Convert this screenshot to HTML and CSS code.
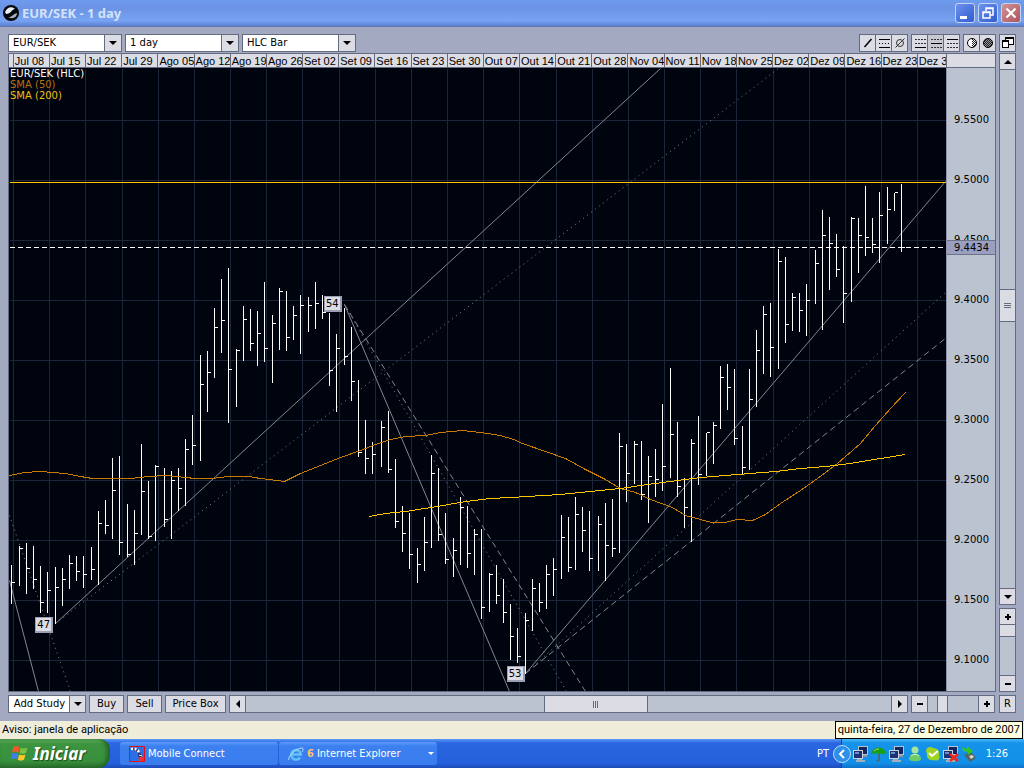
FILE: index.html
```
<!DOCTYPE html>
<html lang="pt">
<head>
<meta charset="utf-8">
<title>EUR/SEK - 1 day</title>
<link rel="stylesheet" href="styles.css">
</head>
<body>
<svg class="defs" width="0" height="0" aria-hidden="true">
  <defs>
    <pattern id="check" width="2" height="2" patternUnits="userSpaceOnUse"><path d="M0 0h1v1H0zM1 1h1v1H1z" fill="#222"/></pattern>
    <symbol id="computers" viewBox="0 0 16 16">
      <path d="M5 0h10v9H5z" fill="#b9c2cf"/><path d="M6 1h8v7H6z" fill="#14265e"/><path d="M9 9h5v2H9z" fill="#8c97a6"/>
      <path d="M0 4h10v9H0z" fill="#c9d1db"/><path d="M1 5h8v7H1z" fill="#1c3272"/><path d="M2 6h4v2H2z" fill="#6e8fd2"/><path d="M4 13h5v1h3v2H3v-2h1z" fill="#a4adba"/>
    </symbol>
  </defs>
</svg>

<header class="titlebar">
  <svg class="app-icon" viewBox="0 0 16 16" aria-hidden="true"><circle cx="8" cy="8" r="8" fill="#05070d"/><path d="M2 7c2-5 7-6 10-3-3 0-4 5-9 5z" fill="#e8edf2"/><path d="M5 12c3 1 5-3 9-4 0 4-4 7-9 4z" fill="#a9b1bb"/></svg>
  <h1 class="title">EUR/SEK - 1 day</h1>
  <button class="win-btn" aria-label="Minimizar"><svg viewBox="0 0 18 18"><path d="M4 12h7v3H4z" fill="#fff"/></svg></button>
  <button class="win-btn" aria-label="Restaurar"><svg viewBox="0 0 18 18"><path d="M7 7V4h7v7h-3M7 4.500h7M4 8h7v6H4zM4 8.500h7" fill="none" stroke="#fff" stroke-width="1.500"/></svg></button>
  <button class="win-btn win-close" aria-label="Fechar"><svg viewBox="0 0 18 18"><path d="M4.500 4.500l9 9M13.500 4.500l-9 9" stroke="#fff" stroke-width="2.200"/></svg></button>
</header>

<main class="client">
  <div class="toolbar">
    <div class="combo"><select aria-label="Par"><option>EUR/SEK</option></select><span class="combo-arrow"><i class="tri tri-down"></i></span></div>
    <div class="combo"><select aria-label="Período"><option>1 day</option></select><span class="combo-arrow"><i class="tri tri-down"></i></span></div>
    <div class="combo"><select aria-label="Tipo"><option>HLC Bar</option></select><span class="combo-arrow"><i class="tri tri-down"></i></span></div>
    <div class="tools">
      <div class="group">
        <button class="btn tool" aria-label="Linha"><svg viewBox="0 0 16 16"><path d="M4.500 12l7-8" stroke="#000" stroke-width="1.500"/></svg></button>
        <button class="btn tool" aria-label="Canal"><svg viewBox="0 0 16 16" class="crisp"><path d="M3 4h11v1H3zM3 12h11v1H3z"/><path d="M3 8h1v1H3zM6 8h1v1H6zM9 8h1v1H9zM12 8h1v1h-1z"/></svg></button>
        <button class="btn tool" aria-label="Sem linhas"><svg viewBox="0 0 16 16"><circle cx="8" cy="8" r="3.500" fill="none" stroke="#333"/><path d="M3.500 12.500l9-9" stroke="#333"/></svg></button>
      </div>
      <div class="group">
        <button class="btn tool" aria-label="Níveis inferiores"><svg viewBox="0 0 16 16" class="crisp"><path d="M3 12h11v1H3z"/><path d="M3 4.500h11M3 8.500h11" stroke="#333" stroke-dasharray="2 1"/></svg></button>
        <button class="btn tool pressed" aria-label="Níveis centrais"><svg viewBox="0 0 16 16" class="crisp"><path d="M3 8h11v1H3z"/><path d="M3 4.500h11M3 12.500h11" stroke="#333" stroke-dasharray="2 1"/></svg></button>
        <button class="btn tool" aria-label="Níveis superiores"><svg viewBox="0 0 16 16" class="crisp"><path d="M3 4h11v1H3z"/><path d="M3 8.500h11M3 12.500h11" stroke="#333" stroke-dasharray="2 1"/></svg></button>
      </div>
      <div class="group">
        <button class="btn tool" aria-label="Meio tom"><svg viewBox="0 0 16 16"><circle cx="8" cy="8" r="4.500" fill="#fff"/><path d="M8 3.500a4.500 4.500 0 010 9z" fill="url(#check)"/><circle cx="8" cy="8" r="4.500" fill="none" stroke="#000"/></svg></button>
        <button class="btn tool" aria-label="Tom cheio"><svg viewBox="0 0 16 16"><circle cx="8" cy="8" r="4.500" fill="#999"/><circle cx="8" cy="8" r="4.500" fill="url(#check)" stroke="#000"/></svg></button>
      </div>
      <div class="group group-last">
        <button class="btn tool" aria-label="Janelas"><svg viewBox="0 0 16 16" class="crisp" fill="#fff" stroke="#000"><path d="M5.500 2.500h8v7h-8zM5 3.500h8"/><path d="M2.500 5.500h6v7h-6zM2 6.500h6"/></svg></button>
      </div>
    </div>
  </div>

  <div class="workspace">
    <section class="frame" aria-label="Gráfico EUR/SEK">
      <div class="dates">
        <div class="dates-scale" id="dates"></div>
        <div class="dates-corner"></div>
      </div>
      <div class="plot-row">
        <div class="plot">
          <svg class="chart" viewBox="8.500 67.500 937 623" preserveAspectRatio="none" role="img" aria-label="EUR/SEK HLC">
            <path id="grid" class="grid"/>
            <g class="trend">
              <path d="M55 623L660 68M344 304L509 691M525 673L945 181M9 580L38 691"/>
              <path class="dots" d="M55 623L778 68M344 304L566 691M525 673L946 291M9 515L70 691"/>
              <path class="dashes" d="M344 304L585 691M525 673L946 337"/>
            </g>
            <path class="last" d="M9 247H946"/>
            <path id="bars" class="bars"/>
            <polyline class="sma50" points="9,475 24,472 40,471 65,473 80,476 92,478 130,478 148,476 165,475 195,478 212,478 228,476 248,476 260,478 284,481 300,473 320,465 340,457 360,450 375,444 390,439 405,436 425,435 440,432 462,430 480,432 500,435 513,439 522,443 545,451 565,458 585,469 603,478 620,488 635,492 650,499 672,507 685,515 700,519 711,522 724,522 737,519 752,520 765,514 780,503 800,490 817,478 837,463 860,443 875,425 890,408 905,392"/>
            <polyline class="sma200" points="369,516 385,513 405,511 437,506 465,501 490,498 510,497 560,494 590,491 620,488 647,484 677,480 700,477 737,474 775,471 800,468 825,466 850,463 880,458 905,454"/>
            <path class="high" d="M9 182H946"/>
          </svg>
          <ul class="legend"><li>EUR/SEK (HLC)</li><li class="c50">SMA (50)</li><li class="c200">SMA (200)</li></ul>
          <span class="pin pin-47">47</span><span class="pin pin-54">54</span><span class="pin pin-53">53</span>
        </div>
        <div class="axis">
          <span>9.5500</span><span>9.5000</span><span>9.4500</span><span>9.4000</span><span>9.3500</span><span>9.3000</span><span>9.2500</span><span>9.2000</span><span>9.1500</span><span>9.1000</span>
          <strong class="current">9.4434</strong>
        </div>
      </div>
    </section>
    <div class="vertical">
      <div class="vbar vscroll">
        <button class="btn end" aria-label="Subir"><i class="tri tri-up"></i></button>
        <div class="space space-a"></div><div class="thumb vthumb"><i class="grip"></i></div><div class="space space-b"></div>
        <button class="btn end" aria-label="Descer"><i class="tri tri-down"></i></button>
      </div>
      <div class="vbar vzoom">
        <button class="btn end" aria-label="Ampliar preço"><i class="plus"></i></button>
        <div class="thumb small"></div><div class="space"></div>
        <button class="btn end" aria-label="Reduzir preço"><i class="minus"></i></button>
      </div>
    </div>
  </div>

  <div class="bottom">
    <div class="study"><button class="study-main">Add Study</button><button class="btn end" aria-label="Lista de estudos"><i class="tri tri-down"></i></button></div>
    <button class="btn text-btn">Buy</button>
    <button class="btn text-btn">Sell</button>
    <button class="btn text-btn wide">Price Box</button>
    <div class="hbar hscroll">
      <button class="btn end" aria-label="Esquerda"><i class="tri tri-left"></i></button>
      <div class="space space-c"></div><div class="thumb hthumb"><i class="grip grip-v"></i></div><div class="space space-d"></div>
      <button class="btn end" aria-label="Direita"><i class="tri tri-right"></i></button>
    </div>
    <div class="hbar hzoom">
      <button class="btn end" aria-label="Reduzir"><i class="minus"></i></button>
      <div class="space"></div><div class="thumb hsmall"></div><div class="space space-f"></div>
      <button class="btn end" aria-label="Ampliar"><i class="plus"></i></button>
    </div>
    <button class="btn reset">R</button>
  </div>
</main>

<div class="status"><span>Aviso: janela de aplicação</span><span class="tooltip" role="tooltip">quinta-feira, 27 de Dezembro de 2007</span></div>

<footer class="taskbar">
  <button class="start"><svg viewBox="0 0 18 18" aria-hidden="true"><path d="M3 3c2-1.500 4-1.500 6 0L8 8C6 7 4 7 2 8z" fill="#ee5a2c"/><path d="M10 3.500c2 1 4 1 6.500 0l-1.500 5c-2 1-4 1-6 0z" fill="#7dc242"/><path d="M1.700 9.500c2-1.500 4-1 6 0l-1 5c-2-1-4-1-6.200 0z" fill="#3f7fe8"/><path d="M8.700 10c2 1 4 1 6 0l-1.400 5c-2 1-4 1-6 0z" fill="#fcc828"/></svg>Iniciar</button>
  <button class="task"><svg viewBox="0 0 16 16" aria-hidden="true"><path d="M.5.500h15v15H.5z" fill="#2a6fe6" stroke="#e01010"/><path d="M2 3c3-1 6 0 8 3" fill="none" stroke="#fff" stroke-width="2.500" stroke-dasharray="2 1.500"/><path d="M2 3.500c3-1 6 0 8 3" fill="none" stroke="#a01818" stroke-width="2.500" stroke-dasharray="1 2.500" stroke-dashoffset="-2.300"/><path d="M9 7l3 1 1 3-3 1z" fill="#3a1012"/><circle cx="12" cy="13" r="2.500" fill="#e33"/><path d="M10 9l3 1" stroke="#fff"/></svg>Mobile Connect</button>
  <button class="task"><svg viewBox="0 0 16 16" aria-hidden="true"><path d="M12 11.500a4.800 4.800 0 11.800-3H4" fill="none" stroke="#62c4f5" stroke-width="2.500"/><path d="M1 14C-1 11 8 2 14 2c2 0 1 3 0 4" fill="none" stroke="#b9dcf6"/></svg><b class="count">6</b>Internet Explorer<i class="tri tri-down tri-white"></i></button>
  <span class="lang">PT</span>
  <div class="tray">
    <button class="chevron" aria-label="Mostrar ícones"><svg viewBox="0 0 18 18"><circle cx="9" cy="9" r="8.500" fill="#2f8fe8" stroke="#b9def8"/><path d="M11 5L7 9l4 4" fill="none" stroke="#fff" stroke-width="2"/></svg></button>
    <svg viewBox="0 0 16 16"><use href="#computers"/></svg>
    <svg viewBox="0 0 16 16"><path d="M0 8c2-8 12-9 16 0-2-1-3-1-4 1-1-2-3-2-4 0-1-2-3-2-4-1-1-1-3-1-4 0z" fill="#18a018"/><path d="M3 5c2-2 4-2 5-2" stroke="#a7e05a" fill="none"/><path d="M8 8v6c0 2-2 1-2 0" fill="none" stroke="#6b4a20"/></svg>
    <svg viewBox="0 0 16 16"><use href="#computers"/></svg>
    <svg viewBox="0 0 16 16"><circle cx="8" cy="4" r="3.500" fill="#a5e49a"/><path d="M2 13c0-7 12-7 12 0 0 3-12 3-12 0z" fill="#6ccb68"/><path d="M4 10c2-2 6-2 8 0" stroke="#d7f6d0" fill="none"/></svg>
    <svg viewBox="0 0 16 16"><path d="M1 5c0-4 5-5 7-3 5 0 7 4 6 7 2 3-1 7-5 5-4 1-8-2-7-6z" fill="#9dd424"/><path d="M4 7l3 3 6-5" fill="none" stroke="#fff" stroke-width="2"/></svg>
    <svg viewBox="0 0 16 16"><use href="#computers"/><path d="M7 8l8 7M15 8l-8 7" stroke="#f2261c" stroke-width="2.500"/></svg>
    <svg viewBox="0 0 16 16"><path d="M3 9l7-3 5 6-6 4z" fill="#59645f"/><path d="M8 10l3-1 2 2-3 2z" fill="#d5dcd6"/><path d="M1 1l5 2V0l6 5-5 4V6L2 5z" fill="#2ec42a"/></svg>
    <time class="clock">1:26</time>
  </div>
</footer>
<script src="chart.js"></script>
</body>
</html>
```
FILE: styles.css
```
* { box-sizing: border-box; }
body { margin: 0; height: 100vh; display: flex; flex-direction: column; overflow: hidden; background: #a3a9c0; color: #000; font: 10px/12px "DejaVu Sans", sans-serif; }
button, select { font: inherit; color: inherit; margin: 0; padding: 0; border: 0; border-radius: 0; background: none; }
ul { list-style: none; margin: 0; padding: 0; }
svg { display: block; flex: none; }
.defs { position: absolute; }
.crisp { shape-rendering: crispEdges; }

.titlebar { height: 27px; flex: none; display: flex; align-items: center; gap: 3px; padding: 0 3px; background: linear-gradient(#6f9bef, #6b93e4 30%, #78a3f2 80%, #5a7fd0); border-bottom: 1px solid #6478b4; }
.app-icon { width: 16px; height: 16px; }
.title { flex: 1; margin: 0; font: bold 13px/16px "Noto Sans", sans-serif; color: #d3e2f9; }
.win-btn { width: 20px; height: 20px; flex: none; border: 1px solid #c3d3f3; border-radius: 3px; background: linear-gradient(135deg, #6d92ee, #2f5bd0); }
.win-btn svg { width: 18px; height: 18px; }
.win-close { background: linear-gradient(135deg, #cf9494, #ad5361); }

.client { flex: 1; min-height: 0; display: flex; flex-direction: column; padding: 7px 8px 8px; }
.toolbar { height: 18px; flex: none; display: flex; gap: 3px; margin-bottom: 1px; }
.combo { width: 114px; display: flex; border: 1px solid #626b80; background: #fff; }
.combo select { flex: 1; min-width: 0; appearance: none; padding-left: 4px; background: #fff; }
.combo-arrow { width: 17px; display: grid; place-items: center; border-left: 1px solid #626b80; background: #dcdce4; }
.tri { width: 0; height: 0; border: 4px solid transparent; }
.tri-down { border-top-color: #000; border-bottom: 0; }
.tri-up { border-bottom-color: #000; border-top: 0; }
.tri-left { border-right-color: #000; border-left: 0; }
.tri-right { border-left-color: #000; border-right: 0; }
.tri-white { border-top-color: #fff; border-width: 3px 3px 0; margin-left: auto; }
.tools { margin-left: auto; display: flex; gap: 3px; }
.group { display: flex; }
.btn { border: 1px solid #626b80; background: #dcdce4; display: grid; place-items: center; }
.tool { width: 17px; height: 18px; }
.tool + .tool { margin-left: -1px; }
.tool svg { width: 16px; height: 16px; }
.pressed { background: #c8c8d2; }

.workspace { flex: 1; min-height: 0; display: flex; gap: 3px; }
.frame { flex: 1; min-width: 0; display: flex; flex-direction: column; border: 1px solid #626b80; }
.dates { height: 14px; flex: none; display: flex; background: #dcdce4; border-bottom: 1px solid #626b80; font: 11px/14px "Liberation Sans", sans-serif; }
.dates-scale { flex: 1; min-width: 0; display: flex; }
.dates-scale span { flex: 904 1 0; min-width: 0; overflow: hidden; white-space: nowrap; padding-left: 1px; border-left: 1px solid #626b80; }
.dates-scale .lead { flex-grow: 100; padding: 0; border: 0; }
.dates-scale .tail { flex-grow: 725; }
.dates-corner { width: 49px; border-left: 1px solid #626b80; }
.plot-row { flex: 1; min-height: 0; display: flex; }
.plot { flex: 1; min-width: 0; position: relative; background: #00040f; }
.chart { position: absolute; width: 100%; height: 100%; }
.chart path, .chart polyline { fill: none; vector-effect: non-scaling-stroke; shape-rendering: crispEdges; }
.grid { stroke: #1b2638; }
.chart .trend path { stroke: #84878f; shape-rendering: auto; }
.trend .dots { stroke-dasharray: 1 4; }
.trend .dashes { stroke-dasharray: 6 4; }
.last { stroke: #fff; stroke-dasharray: 5 3; }
.bars { stroke: #fff; }
.sma50 { stroke: #c97a00; }
.sma200, .high { stroke: #ffc400; }
.legend { position: absolute; top: 0; left: 1px; color: #fff; line-height: 11px; }
.c50 { color: #b87010; }
.c200 { color: #f5be10; }
.pin { position: absolute; width: 18px; height: 16px; line-height: 13px; text-align: center; color: #000; background: #dcdce4; border: 1px solid #9a9fb4; border-right-width: 2px; border-bottom-width: 2px; }
.pin-47 { left: 2.800%; top: 88.200%; }
.pin-54 { left: 33.600%; top: 36.600%; }
.pin-53 { left: 53.100%; top: 96%; }
.axis { width: 49px; flex: none; position: relative; display: flex; flex-direction: column; padding: 22px 0 1px 7px; border-left: 1px solid #8d94a8; background: #bac3cf; }
.axis span { flex: 1; display: flex; align-items: center; }
.current { position: absolute; left: 0; right: 0; top: 27.600%; height: 15px; padding-left: 7px; line-height: 13px; font-weight: normal; background: #9a9fc0; border: solid #6d7488; border-width: 1px 0; }

.vertical { width: 17px; flex: none; display: flex; flex-direction: column; gap: 3px; }
.vbar { display: flex; flex-direction: column; border: 1px solid #626b80; background: #bac3cf; }
.vbar .end { height: 17px; margin: -1px; flex: none; }
.vscroll { flex: 1; }
.vzoom { height: 84px; }
.space { flex: 1; }
.space-a { flex: 220; }
.space-b { flex: 268; }
.thumb { flex: none; display: grid; place-items: center; background: #dcdce4; border: 0 solid #626b80; }
.vthumb { height: 33px; border-width: 1px 0; }
.small { height: 12px; border-bottom-width: 1px; margin-top: 1px; }
.grip { width: 7px; height: 5px; border: solid #626b80; border-width: 1px 0; background: linear-gradient(transparent 1px, #626b80 1px, #626b80 2px, transparent 2px); }
.grip-v { width: 5px; height: 7px; border-width: 0 1px; background: linear-gradient(90deg, transparent 1px, #626b80 1px, #626b80 2px, transparent 2px); }
.plus, .minus { width: 6px; height: 2px; background: #000; display: block; }
.plus { height: 6px; background: linear-gradient(#000, #000) center / 2px 6px no-repeat, linear-gradient(#000, #000) center / 6px 2px no-repeat; }

.bottom { height: 18px; flex: none; display: flex; gap: 3px; margin-top: 3px; }
.study { width: 78px; display: flex; border: 1px solid #626b80; background: #fff; }
.study-main { flex: 1; text-align: center; }
.end { width: 17px; }
.study .end { margin: -1px; }
.text-btn { width: 35px; }
.wide { width: 61px; }
.hbar { display: flex; border: 1px solid #626b80; background: #bac3cf; }
.hbar .end { margin: -1px; flex: none; }
.hscroll { flex: 1; }
.hzoom { width: 84px; }
.space-c { flex: 298; }
.space-d { flex: 244; }
.space-f { flex: 3; }
.hthumb { width: 104px; border-width: 0 1px; }
.hsmall { width: 11px; border-width: 0 1px; }
.reset { width: 17px; margin-left: 1px; }

.status { height: 18px; flex: none; position: relative; padding-left: 2px; background: #f0ecda; font: 11px/18px Roboto, sans-serif; }
.tooltip { position: absolute; right: 1px; top: 0; height: 18px; line-height: 16px; padding: 0 2px; border: 1px solid #000; background: #ffffe1; white-space: nowrap; }

.taskbar { height: 29px; flex: none; display: flex; align-items: center; background: linear-gradient(#5c9af8, #2a66e0 4px, #2560dc 24px, #1c4cb8); color: #fff; font: 11px/14px "DejaVu Sans Condensed", sans-serif; }
.start { width: 110px; height: 29px; flex: none; display: flex; align-items: center; gap: 4px; padding-left: 10px; margin-right: 10px; border-radius: 0 10px 12px 0; background: linear-gradient(#6fb96a, #3c9440 5px, #37903b 22px, #2a6f2d); box-shadow: inset -3px 0 4px #235f27; font: italic bold 17px/24px "Noto Sans", sans-serif; text-shadow: 1px 1px 1px #1c4a1e; }
.start svg { width: 19px; height: 19px; }
.task { width: 158px; height: 23px; flex: 0 1 auto; display: flex; align-items: center; gap: 3px; padding: 0 3px 0 9px; margin-right: 1px; border-radius: 3px; background: linear-gradient(#5d9bfa, #3c80f0 4px, #3a7cee); white-space: nowrap; }
.task svg { width: 16px; height: 16px; }
.count { color: #ffc266; }
.lang { margin-left: auto; margin-right: 12px; }
.tray { width: 183px; height: 29px; flex: none; display: flex; align-items: center; gap: 2px; padding-right: 16px; border-left: 1px solid #0c48a8; background: linear-gradient(#4cb8f8, #1593ea 4px, #1290e8 24px, #0f70c8); }
.tray svg { width: 16px; height: 16px; }
.tray .chevron { margin-left: -9px; flex: none; }
.tray .chevron svg { width: 18px; height: 18px; }
.clock { margin-left: auto; }
```
FILE: chart.js
```
// Week labels along the top of the chart.
const weeks = ["Jul 08", "Jul 15", "Jul 22", "Jul 29", "Ago 05", "Ago 12", "Ago 19", "Ago 26", "Set 02", "Set 09", "Set 16", "Set 23", "Set 30", "Out 07", "Out 14", "Out 21", "Out 28", "Nov 04", "Nov 11", "Nov 18", "Nov 25", "Dez 02", "Dez 09", "Dez 16", "Dez 23", "Dez 30"];
const dates = document.getElementById("dates");
const lead = document.createElement("span");
lead.className = "lead";
dates.append(lead);
weeks.forEach((week, i) => {
  const cell = document.createElement("span");
  cell.textContent = week;
  if (i === weeks.length - 1) cell.className = "tail";
  dates.append(cell);
});

// Grid: one vertical line a week, one horizontal line every 0.05.
let grid = "";
for (let i = 0; i < 26; i++) grid += `M${Math.round(13 + i * 36.17)} 68V691`;
for (let y = 120; y < 691; y += 60) grid += `M9 ${y}H946`;
document.getElementById("grid").setAttribute("d", grid);

// Daily bars: x, high, low, close.
const bars = [
  [11,564,603,582],[19,545,585,548],[26,542,593,568],[33,545,588,579],[40,565,612,602],[47,571,612,590],[55,566,623,587],[62,567,605,579],[69,554,588,563],[76,555,580,571],[83,555,587,574],[91,546,579,569],[98,510,584,523],[105,499,533,525],[112,457,538,490],[119,455,554,542],[127,503,556,554],[134,509,564,533],[141,443,534,491],[148,480,538,536],[155,464,540,466],[164,467,526,519],[171,470,538,480],[178,467,510,488],[185,438,505,449],[192,414,464,445],[200,354,460,384],[207,350,411,372],[214,307,377,327],[221,278,352,320],[228,267,422,369],[236,348,406,350],[243,305,360,319],[250,308,350,343],[257,310,365,333],[264,281,361,348],[272,314,382,323],[279,287,349,291],[286,290,350,337],[293,305,339,315],[300,294,353,305],[308,296,331,305],[315,281,328,303],[322,294,318,312],[329,312,385,370],[336,333,411,348],[344,307,364,356],[351,326,400,381],[358,379,456,452],[365,419,473,458],[372,441,473,454],[381,420,466,427],[388,410,472,469],[395,458,527,521],[402,505,551,533],[409,512,568,554],[417,547,582,564],[424,516,570,542],[431,454,547,473],[438,467,540,534],[445,512,563,559],[453,537,576,550],[460,496,564,507],[467,505,567,553],[474,528,574,534],[481,528,618,607],[489,572,611,574],[496,564,603,595],[503,578,622,612],[510,603,659,636],[517,627,662,656],[525,612,673,620],[532,578,630,588],[539,582,611,602],[546,564,608,574],[553,557,595,569],[561,514,578,537],[568,516,571,567],[575,496,569,514],[582,506,551,530],[589,510,570,558],[598,515,570,524],[605,502,580,545],[612,498,556,548],[619,432,552,446],[626,443,501,473],[634,440,483,444],[641,440,499,494],[648,455,522,476],[655,448,496,479],[662,403,490,466],[670,367,477,434],[677,421,496,486],[684,477,527,507],[691,438,541,443],[698,415,484,474],[706,432,475,432],[713,421,463,425],[720,365,428,377],[727,363,409,387],[734,368,444,438],[742,425,473,467],[749,368,469,399],[756,329,406,350],[763,305,373,314],[770,302,376,347],[778,248,368,261],[785,256,342,324],[792,292,330,297],[799,292,331,310],[806,283,335,300],[815,249,303,263],[822,209,329,235],[829,216,289,243],[836,233,276,269],[843,245,322,293],[851,216,301,218],[858,217,272,235],[865,185,255,237],[872,217,252,244],[879,191,262,215],[887,186,243,209],[894,192,210,192],[901,183,251,247]
];
document.getElementById("bars").setAttribute("d",
  bars.map(([x, high, low, close]) => `M${x} ${high}V${low}M${x} ${close}h3`).join(""));
```
